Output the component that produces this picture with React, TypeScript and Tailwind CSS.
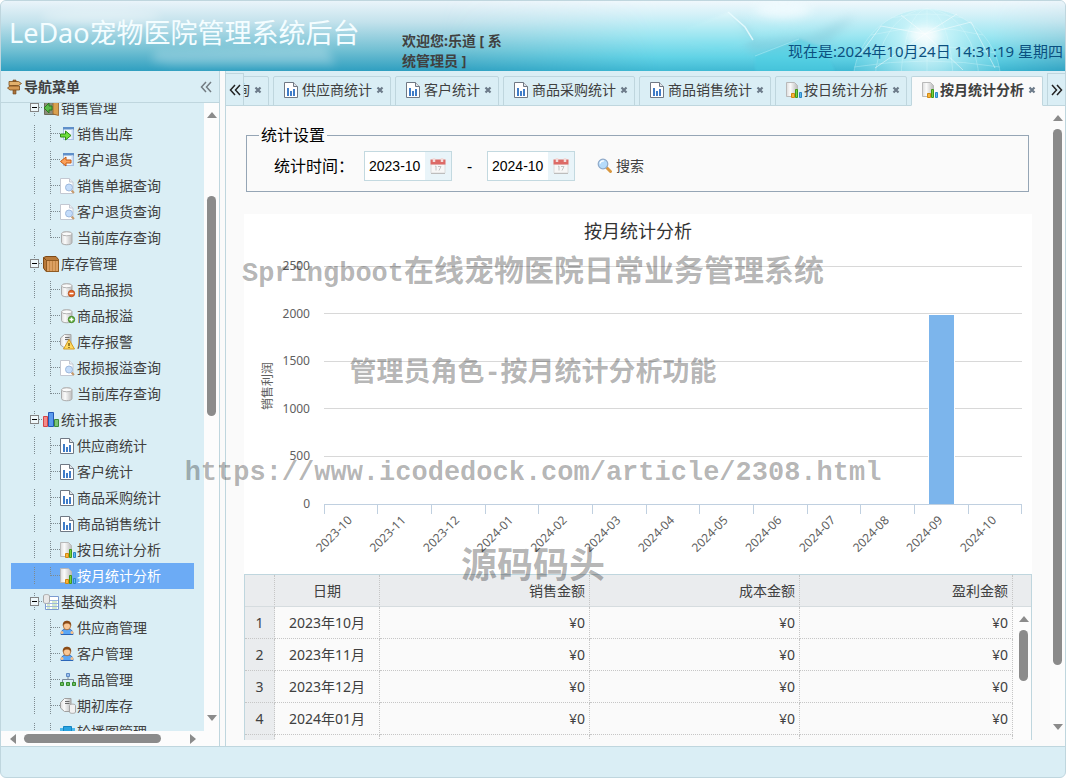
import type { ReactNode } from "react";

type IconName =
  | "signpost" | "door" | "appGo" | "appBack" | "pageSearch" | "db" | "box" | "dbMinus" | "dbPlus"
  | "serverWarn" | "bars" | "pageBars" | "docChart" | "dbTable" | "user" | "sitemap" | "serverDb"
  | "slides" | "calendar" | "magnifier";

const cylinder = (
  <>
    <path d="M1.500 4c0-3 10.500-3 10.500 0v8.500c0 3-10.500 3-10.500 0z" fill="url(#metal)" stroke="#aaa" />
    <ellipse cx="6.750" cy="3.800" rx="5.200" ry="2" fill="#fafafa" stroke="#b4b4b4" />
  </>
);

const windowFrame = (
  <>
    <rect x="3.500" y="1.500" width="10" height="12" fill="#f3f8fe" stroke="#a9c0e2" />
    <path d="M3 1h11v2.500H3z" fill="#5f8fc9" />
    <path d="M11.500 3.500H13V13h-1.500z" fill="#c9dcf3" />
  </>
);

const icons: Record<IconName, ReactNode> = {
  signpost: (
    <>
      <path d="M6 1h3v14H6z" fill="#a9713a" stroke="#6f4518" strokeWidth=".6" />
      <path d="M2 2.500h9.500l3 2-3 2H2z" fill="#e2b06c" stroke="#7b4c1b" strokeWidth=".8" />
      <path d="M12.500 7H3L.5 9 3 11h9.500z" fill="#d59a55" stroke="#7b4c1b" strokeWidth=".8" />
    </>
  ),
  door: (
    <>
      <path d="M1.500 1.500h13v13h-13z" fill="#8b8b7a" stroke="#6c6c5c" />
      <path d="M10 1l5.500-.5v15L10 14z" fill="#d9a04f" stroke="#94602a" strokeWidth=".8" />
      <path d="M9 6H6V3L1 8l5 5v-3h3z" fill="#58b947" stroke="#2b7a1f" />
    </>
  ),
  appGo: (
    <>
      {windowFrame}
      <path d="M.5 8h5V5l5.500 4.500L5.500 14v-3h-5z" fill="#6fe03c" stroke="#2f8a16" />
    </>
  ),
  appBack: (
    <>
      {windowFrame}
      <path d="M11 8H6V5L.5 9.500 6 14v-3h5z" fill="#fba15a" stroke="#c65a12" />
    </>
  ),
  pageSearch: (
    <>
      <path d="M.5 .5h9l3.500 3.500v11.500H.5z" fill="#fff" stroke="#c3c8d2" />
      <path d="M9.500 .5V4H13" fill="#e9edf3" stroke="#c3c8d2" />
      <path d="M11.500 12.500l2.500 2.500" stroke="#c59a6c" strokeWidth="2" />
      <circle cx="9" cy="9.500" r="3.500" fill="#c4dcfa" stroke="#9db8dc" />
    </>
  ),
  db: cylinder,
  dbMinus: (
    <>
      {cylinder}
      <circle cx="11.500" cy="11.500" r="3.200" fill="#e2672a" stroke="#b34510" strokeWidth=".8" />
      <path d="M9.500 11.500h4" stroke="#fff" strokeWidth="1.500" />
    </>
  ),
  dbPlus: (
    <>
      {cylinder}
      <circle cx="11.500" cy="11.500" r="3.200" fill="#5fae3c" stroke="#3a7d1d" strokeWidth=".8" />
      <path d="M9.500 11.500h4M11.500 9.500v4" stroke="#fff" strokeWidth="1.500" />
    </>
  ),
  serverWarn: (
    <>
      <path d="M.5 4l4-3.500H11v13H4L.5 11z" fill="url(#metal)" stroke="#a8a8a8" />
      <path d="M5 3.500h4.500M5 5.500h4.500" stroke="#6f6f6f" />
      <path d="M9 5.500l5.500 9.500H3.500z" fill="#ffd95e" stroke="#d29a22" />
      <path d="M9 9v3M9 13v1" stroke="#5b4300" strokeWidth="1.200" />
    </>
  ),
  box: (
    <>
      <path d="M.5 1.500L3 .5h10l2.500 3v12H3L.5 12z" fill="#b97a3a" stroke="#7d4a17" />
      <path d="M3.500 4.500h12v11h-12z" fill="#dca062" stroke="#8f5a22" />
      <path d="M6.500 5v10M9.500 5v10M12.500 5v10" stroke="#c48746" />
      <path d="M.5 1.500l3 3" stroke="#7d4a17" />
    </>
  ),
  bars: (
    <>
      <path d="M.5 4.500h4v10h-4z" fill="#f58a8a" stroke="#d44545" />
      <path d="M5.500 .5h5v14h-5z" fill="#5b9bef" stroke="#2458b5" />
      <path d="M11.500 7.500h4v7h-4z" fill="#7cc576" stroke="#3f8a3a" />
    </>
  ),
  pageBars: (
    <>
      <path d="M.5 .5h9l4 4v11H.5z" fill="#fff" stroke="#6f7884" />
      <path d="M3 6h2v8H3zM6 9h2v5H6zM9 7h2v7H9z" fill="#3f7cc7" />
      <path d="M9.500 .5v4h4" fill="#dfe3e8" stroke="#6f7884" />
    </>
  ),
  docChart: (
    <>
      <path d="M.5 .5h8l3 3v11H.5z" fill="url(#metal)" stroke="#b9b9b9" />
      <path d="M5.500 11.500h3v4h-3z" fill="#f7b43a" stroke="#d18812" />
      <path d="M9.500 7.500h2v8h-2z" fill="#7bcf3d" stroke="#3f971a" />
      <path d="M13.500 10.500h2v5h-2z" fill="#5cb7ef" stroke="#2b86c7" />
    </>
  ),
  dbTable: (
    <>
      <path d="M2.500 2.500h13v13h-13z" fill="#fff" stroke="#7b9bd0" />
      <path d="M3 6.500h12M3 9.500h12M3 12.500h12" stroke="#9db7e0" />
      <path d="M4 11h3M9 8h5M9 11h5M4 14h3M9 14h5" stroke="#a9d49b" />
      <path d="M.5 2c0-2 6-2 6 0v6c0 2-6 2-6 0z" fill="#e8e8e8" stroke="#a8a8a8" />
    </>
  ),
  user: (
    <>
      <path d="M1 14.500c0-4 2-5.500 6-5.500s6 1.500 6 5.500z" fill="#5ba7f5" stroke="#2b66b8" />
      <circle cx="2" cy="12.500" r="1.500" fill="#f7c08a" />
      <circle cx="12" cy="12.500" r="1.500" fill="#f7c08a" />
      <ellipse cx="7" cy="6" rx="3.600" ry="3.800" fill="#f9c795" stroke="#a4622a" strokeWidth=".8" />
      <path d="M2.800 6C2.300 2 5 .8 7 .8s4.700 1.200 4.200 5.200c-1-2-2.200-2.500-4.200-2.500S3.800 4 2.800 6z" fill="#8a4b16" />
    </>
  ),
  sitemap: (
    <>
      <path d="M8 5v3M2.500 10V7.500h11V10" fill="none" stroke="#7b8a99" />
      <path d="M6.500 1.500h3v3h-3z" fill="#9cc1ee" stroke="#5d8ac4" />
      <path d="M.5 10.500h3v3h-3zM6.500 10.500h3v3h-3zM12.500 10.500h3v3h-3z" fill="#6dbd62" stroke="#358a2c" />
    </>
  ),
  serverDb: (
    <>
      <path d="M.5 4.500l4-4H11v13H4.500L.5 10z" fill="url(#metal)" stroke="#a0a0a0" />
      <path d="M5 3.500h4.500M5 5.500h4.500" stroke="#6a6a6a" />
      <path d="M9.500 7.500c0-1.800 6-1.800 6 0V14c0 1.800-6 1.800-6 0z" fill="#f1f1f1" stroke="#a4a4a4" />
    </>
  ),
  slides: (
    <>
      <path d="M3.500 2.500h8v12h-8z" fill="#29a3e0" stroke="#1385c2" />
      <path d="M0 4h3v9H0zM12 4h3v9h-3z" fill="#4cb9ec" />
    </>
  ),
  calendar: (
    <>
      <path d="M1 6h14v9H1z" fill="#f7f7f7" stroke="#dcdcdc" />
      <path d="M.5 1.500h15V6.500H.5z" fill="#dd6a66" />
      <path d="M4 0v4M12 0v4" stroke="#f3dcdb" strokeWidth="2.500" />
      <path d="M5 8.500l1-.5v4.500M8 8.500h3l-2 4" fill="none" stroke="#c2c2c2" />
      <path d="M1 15.500h14" stroke="#bdbdbd" />
    </>
  ),
  magnifier: (
    <>
      <path d="M9.500 9.500l4 4" stroke="#d9973f" strokeWidth="3" strokeLinecap="round" />
      <circle cx="6" cy="6" r="4.800" fill="#b5dbfa" stroke="#8fa9c8" strokeWidth="1.200" />
      <path d="M3 5.500c.5-2 2-2.700 4-2.500" fill="none" stroke="#fff" strokeWidth="1.200" />
    </>
  ),
};

function Icon({ name }: { name: IconName }) {
  return (
    <svg viewBox="0 0 16 16" className="h-4 w-4 shrink-0" aria-hidden="true">
      {icons[name]}
    </svg>
  );
}

function Chevrons({ right }: { right?: boolean }) {
  return (
    <svg viewBox="0 0 12 12" className={right ? "h-3 w-3 rotate-180" : "h-3 w-3"} aria-hidden="true">
      <path d="M6 1L1.500 6 6 11M11 1L6.500 6l4.500 5" fill="none" stroke="currentColor" strokeWidth="1.500" />
    </svg>
  );
}

type NodeItem = { label: string; icon: IconName };
type Group = NodeItem & { children: NodeItem[] };

const menu: Group[] = [
  {
    label: "销售管理",
    icon: "door",
    children: [
      { label: "销售出库", icon: "appGo" },
      { label: "客户退货", icon: "appBack" },
      { label: "销售单据查询", icon: "pageSearch" },
      { label: "客户退货查询", icon: "pageSearch" },
      { label: "当前库存查询", icon: "db" },
    ],
  },
  {
    label: "库存管理",
    icon: "box",
    children: [
      { label: "商品报损", icon: "dbMinus" },
      { label: "商品报溢", icon: "dbPlus" },
      { label: "库存报警", icon: "serverWarn" },
      { label: "报损报溢查询", icon: "pageSearch" },
      { label: "当前库存查询", icon: "db" },
    ],
  },
  {
    label: "统计报表",
    icon: "bars",
    children: [
      { label: "供应商统计", icon: "pageBars" },
      { label: "客户统计", icon: "pageBars" },
      { label: "商品采购统计", icon: "pageBars" },
      { label: "商品销售统计", icon: "pageBars" },
      { label: "按日统计分析", icon: "docChart" },
      { label: "按月统计分析", icon: "docChart" },
    ],
  },
  {
    label: "基础资料",
    icon: "dbTable",
    children: [
      { label: "供应商管理", icon: "user" },
      { label: "客户管理", icon: "user" },
      { label: "商品管理", icon: "sitemap" },
      { label: "期初库存", icon: "serverDb" },
      { label: "轮播图管理", icon: "slides" },
    ],
  },
];

const tabs: NodeItem[] = [
  { label: "当前库存查询", icon: "db" },
  { label: "供应商统计", icon: "pageBars" },
  { label: "客户统计", icon: "pageBars" },
  { label: "商品采购统计", icon: "pageBars" },
  { label: "商品销售统计", icon: "pageBars" },
  { label: "按日统计分析", icon: "docChart" },
  { label: "按月统计分析", icon: "docChart" },
];

const activeLabel = "按月统计分析";

const stats = [
  { month: "2023-10", profit: 0 },
  { month: "2023-11", profit: 0 },
  { month: "2023-12", profit: 0 },
  { month: "2024-01", profit: 0 },
  { month: "2024-02", profit: 0 },
  { month: "2024-03", profit: 0 },
  { month: "2024-04", profit: 0 },
  { month: "2024-05", profit: 0 },
  { month: "2024-06", profit: 0 },
  { month: "2024-07", profit: 0 },
  { month: "2024-08", profit: 0 },
  { month: "2024-09", profit: 1990 },
  { month: "2024-10", profit: 0 },
];

const rows = ["2023年10月", "2023年11月", "2023年12月", "2024年01月", "2024年02月"];

function Arrow({ d }: { d: string }) {
  return (
    <svg viewBox="0 0 10 10" className="h-2.5 w-2.5 shrink-0" aria-hidden="true">
      <path d={d} fill="#8b8b8b" />
    </svg>
  );
}

function Scrollbar({ before, thumb, after }: { before: number; thumb: number; after: number }) {
  return (
    <div className="flex h-full w-[15px] shrink-0 flex-col items-center bg-[#fcfcfc] py-2">
      <Arrow d="M0 7l5-6 5 6z" />
      <div className="my-[5px] flex w-[9px] flex-1 flex-col">
        <div className="basis-0" style={{ flexGrow: before }} />
        <div className="basis-0 rounded-full bg-[#8b8b8b]" style={{ flexGrow: thumb }} />
        <div className="basis-0" style={{ flexGrow: after }} />
      </div>
      <Arrow d="M0 2l5 6 5-6z" />
    </div>
  );
}

function Banner() {
  return (
    <svg
      viewBox="0 0 1064 70"
      preserveAspectRatio="none"
      className="absolute inset-0 h-full w-full"
      aria-hidden="true"
    >
      <defs>
        <linearGradient id="sky" x1="0" y1="0" x2="0" y2="1">
          <stop offset="0" stopColor="#eaf4fa" />
          <stop offset=".3" stopColor="#c3e2ec" />
          <stop offset=".7" stopColor="#72c0d3" />
          <stop offset="1" stopColor="#2f9fc0" />
        </linearGradient>
        <linearGradient id="cyan" x1="0" y1="0" x2="0" y2="1">
          <stop offset="0" stopColor="#f0f8fc" />
          <stop offset=".2" stopColor="#d3f1f8" />
          <stop offset=".5" stopColor="#9ce6f1" />
          <stop offset=".8" stopColor="#62d3e6" />
          <stop offset="1" stopColor="#40b9d3" />
        </linearGradient>
        <linearGradient id="fadeX" x1="0" y1="0" x2="1" y2="0">
          <stop offset="0" stopColor="#fff" stopOpacity="0" />
          <stop offset=".35" stopColor="#fff" />
          <stop offset=".88" stopColor="#fff" />
          <stop offset="1" stopColor="#fff" stopOpacity=".2" />
        </linearGradient>
        <mask id="rightSide">
          <rect x="440" width="624" height="70" fill="url(#fadeX)" />
        </mask>
        <radialGradient id="globe" cx=".5" cy=".25" r=".6">
          <stop offset="0" stopColor="#fff" />
          <stop offset=".3" stopColor="#cdf5fa" stopOpacity=".9" />
          <stop offset="1" stopColor="#63cfe2" stopOpacity=".4" />
        </radialGradient>
        <linearGradient id="cube" x1="0" y1="0" x2="0" y2="1">
          <stop offset="0" stopColor="#e6f8fb" />
          <stop offset="1" stopColor="#6edbeb" />
        </linearGradient>
        <filter id="soft" x="-50%" y="-200%" width="200%" height="500%">
          <feGaussianBlur stdDeviation="5" />
        </filter>
        <filter id="edge" x="-20%" y="-20%" width="140%" height="140%">
          <feGaussianBlur stdDeviation="1" />
        </filter>
      </defs>
      <rect width="1064" height="70" fill="url(#sky)" />
      <rect x="440" width="624" height="70" fill="url(#cyan)" mask="url(#rightSide)" />
      <ellipse cx="100" cy="16" rx="60" ry="7" fill="#fff" opacity=".35" filter="url(#soft)" />
      <path d="M150 60l5-10 170-4 10 18H170z" fill="#fff" opacity=".25" filter="url(#soft)" />
      <path d="M735 14l20 26 55-6 45-20-30 30-75 8z" fill="#7fbccd" opacity=".35" filter="url(#soft)" />
      <path d="M686 27l41-16 25 29-36 10-30-8z" fill="url(#cube)" opacity=".6" filter="url(#edge)" />
      <path d="M727 11l17 15 8 13" fill="none" stroke="#ecfdff" strokeWidth="1.500" opacity=".8" />
      <path d="M754 55l44-17 24 8 12 24h-80z" fill="#4ccde2" opacity=".5" filter="url(#edge)" />
      <path d="M754 55l44-17" stroke="#c9f6fb" opacity=".4" />
      <ellipse cx="782" cy="8" rx="28" ry="9" fill="#f2fcff" opacity=".8" filter="url(#soft)" />
      <circle cx="926" cy="82" r="74" fill="url(#globe)" opacity=".75" />
      <g fill="none" stroke="#e9fdff" strokeWidth=".7" opacity=".4">
        <circle cx="926" cy="82" r="74" />
        <ellipse cx="926" cy="82" rx="52" ry="74" />
        <ellipse cx="926" cy="82" rx="26" ry="74" />
        <path d="M926 8v62M890 17q36-8 72 0M870 34q56-14 112 0M857 52q69-14 138 0M853 66q73-12 146 0" />
      </g>
      <g fill="none" stroke="#fff" strokeWidth=".8" opacity=".6">
        <path d="M880 25l44 8 46-12M924 33l38 36M924 33l-50 34M900 14l24 19 32-20M970 21l24 46M880 25l-22 30" />
      </g>
      <ellipse cx="923" cy="34" rx="16" ry="8" fill="#fff" opacity=".8" filter="url(#soft)" />
    </svg>
  );
}

function Header() {
  return (
    <header className="relative flex h-[70px] shrink-0 overflow-hidden">
      <Banner />
      <h1 className="relative w-[401px] shrink-0 pt-3 pl-2 text-[27px] leading-10 text-[#f4fdff]">
        LeDao宠物医院管理系统后台
      </h1>
      <p className="relative w-28 shrink-0 pt-[30px] text-sm font-bold text-[#404040]">
        欢迎您:乐道 [ 系统管理员 ]
      </p>
      <time className="relative ml-auto pt-[38px] pr-0.5 text-[15px] leading-6 whitespace-nowrap text-[#0b5080]">
        现在是:2024年10月24日 14:31:19 星期四
      </time>
    </header>
  );
}

function TreeRow({ item, lead }: { item: NodeItem; lead: "root" | "mid" | "last" }) {
  const selected = item.label === activeLabel;
  return (
    <a
      href="#"
      className={`flex h-[26px] items-center whitespace-nowrap text-sm ${
        selected ? "bg-[#6cabf5] text-white" : "text-[#404040]"
      }`}
    >
      {lead === "root" ? (
        <svg viewBox="0 0 32 18" className="h-[18px] w-8 shrink-0" aria-hidden="true">
          <path d="M23.500 0v18M28 8.500h4" stroke="#7d8a90" strokeDasharray="1 1" />
          <rect x="19.500" y="4.500" width="8" height="8" fill="#eef7fa" stroke="#848484" />
          <path d="M21 8.500h5" stroke="#000" />
        </svg>
      ) : (
        <svg viewBox="0 0 49 18" className="h-[18px] w-[49px] shrink-0" aria-hidden="true">
          <path
            d={lead === "last" ? "M23.500 0v18M39.500 0v9M40 8.500h9" : "M23.500 0v18M39.500 0v18M40 8.500h9"}
            stroke="#7d8a90"
            strokeDasharray="1 1"
          />
        </svg>
      )}
      <Icon name={item.icon} />
      <span className={lead === "root" ? "ml-0.5" : "ml-px"}>{item.label}</span>
    </a>
  );
}

function Sidebar() {
  return (
    <aside className="flex w-[219px] shrink-0 flex-col border-r border-[#bfd6de] bg-[#daeef5]">
      <div className="flex h-8 shrink-0 items-center border-b border-[#bfd6de] pr-[7px] pl-1.5">
        <Icon name="signpost" />
        <h2 className="ml-px text-sm font-bold text-[#404040]">导航菜单</h2>
        <button type="button" aria-label="收起" className="ml-auto text-[#737c82]">
          <Chevrons />
        </button>
      </div>
      <div className="flex min-h-0 flex-1">
        <nav className="min-w-0 flex-1 overflow-hidden">
          <ul className="-mt-2 px-2.5">
            {menu.map((group) => (
              <li key={group.label}>
                <TreeRow item={group} lead="root" />
                <ul>
                  {group.children.map((child, i) => (
                    <li key={child.label}>
                      <TreeRow
                        item={child}
                        lead={i === group.children.length - 1 && group.label !== "基础资料" ? "last" : "mid"}
                      />
                    </li>
                  ))}
                </ul>
              </li>
            ))}
          </ul>
        </nav>
        <Scrollbar before={70} thumb={220} after={292} />
      </div>
      <div className="flex h-[15px] shrink-0 items-center bg-[#fcfcfc] pr-[21px] pl-2">
        <Arrow d="M7 0L1 5l6 5z" />
        <div className="mx-[5px] flex h-[9px] flex-1">
          <div className="basis-0 rounded-full bg-[#8b8b8b]" style={{ flexGrow: 137 }} />
          <div className="basis-0" style={{ flexGrow: 22 }} />
        </div>
        <Arrow d="M2 0l6 5-6 5z" />
      </div>
    </aside>
  );
}

function TabStrip() {
  return (
    <div className="flex h-[35px] shrink-0 items-end bg-[#daeef5] shadow-[inset_0_-1px_0_#bfd6de]">
      <button
        type="button"
        aria-label="向左滚动"
        className="flex h-[33px] w-[18px] shrink-0 items-center justify-center border-t border-r border-b border-[#bfd6de] text-[#222]"
      >
        <Chevrons />
      </button>
      <div className="flex min-w-0 flex-1 justify-end gap-1 overflow-hidden pr-1">
        {tabs.map((tab) => {
          const active = tab.label === activeLabel;
          return (
            <div
              key={tab.label}
              className={`flex h-[30px] shrink-0 items-center rounded-t-xs border pr-1.5 pb-0.5 pl-2.5 text-sm text-[#404040] ${
                active ? "border-[#bfd6de] border-b-[#fafafa] bg-[#fafafa] font-bold" : "border-[#bfd6de]"
              }`}
            >
              <Icon name={tab.icon} />
              <a href="#" className="mr-1 ml-0.5 whitespace-nowrap">
                {tab.label}
              </a>
              <button type="button" aria-label="关闭" className="text-[#6c7a89]">
                <svg viewBox="0 0 8 8" className="h-2 w-2" aria-hidden="true">
                  <path d="M1.500 1.500l5 5M6.500 1.500l-5 5" stroke="currentColor" strokeWidth="2.200" />
                </svg>
              </button>
            </div>
          );
        })}
      </div>
      <button
        type="button"
        aria-label="向右滚动"
        className="flex h-[33px] w-[18px] shrink-0 items-center justify-center border-t border-b border-l border-[#bfd6de] text-[#222]"
      >
        <Chevrons right />
      </button>
    </div>
  );
}

function MonthBox({ id, value, label }: { id: string; value: string; label?: string }) {
  return (
    <div className="flex h-[30px] w-[88px] border border-[#c3d9e0] bg-white">
      <input
        id={id}
        aria-label={label}
        defaultValue={value}
        className="w-[60px] min-w-0 pl-1 font-['Liberation_Sans',sans-serif] text-sm text-black outline-none"
      />
      <button
        type="button"
        aria-label="选择月份"
        className="flex flex-1 items-center justify-center bg-[#e9f4f9]"
      >
        <Icon name="calendar" />
      </button>
    </div>
  );
}

function Filters() {
  return (
    <fieldset className="mr-[3px] ml-0.5 border border-[#95a5b5] pt-1 pb-2.5">
      <legend className="ml-3 px-0.5 text-base text-black">统计设置</legend>
      <div className="flex items-center pl-[27px]">
        <label htmlFor="from" className="mr-2.5 text-base text-black">
          统计时间：
        </label>
        <MonthBox id="from" value="2023-10" />
        <span className="w-[35px] text-center text-base">-</span>
        <MonthBox id="to" value="2024-10" label="结束月份" />
        <button type="button" className="ml-[22px] flex items-center gap-[3px] text-sm text-[#404040]">
          <Icon name="magnifier" />
          搜索
        </button>
      </div>
    </fieldset>
  );
}

function Chart() {
  const left = 80;
  const width = 698;
  const bottom = 290;
  const height = 238;
  const step = width / stats.length;
  const snap = (n: number) => Math.floor(n) + 0.5;

  return (
    <svg viewBox="0 0 788 360" className="mt-[22px] block w-full bg-white" role="img" aria-label="按月统计分析">
      <text x="394" y="24" textAnchor="middle" className="fill-[#333] text-[18px]">
        按月统计分析
      </text>
      {[0, 500, 1000, 1500, 2000, 2500].map((v) => {
        const y = bottom - (v / 2500) * height;
        return (
          <g key={v}>
            <path d={`M${left} ${snap(y)}h${width}`} stroke={v ? "#d8d8d8" : "#c0d0e0"} />
            <text x="66" y={y + 4} textAnchor="end" className="fill-[#606060] text-[12px]">
              {v}
            </text>
          </g>
        );
      })}
      <text
        transform="translate(28 172) rotate(-90)"
        textAnchor="middle"
        className="fill-[#606060] text-[12px]"
      >
        销售利润
      </text>
      {stats.map((s, i) => {
        const x = left + step * i;
        const cx = x + step / 2;
        const h = Math.round((s.profit / 2500) * height);
        const barX = Math.round(cx - 12.5);
        return (
          <g key={s.month}>
            <path d={`M${snap(x)} ${bottom}v10`} stroke="#c0d0e0" />
            {h > 0 && (
              <>
                <rect x={barX - 1} y={bottom - h - 1} width="27" height={h + 1} fill="#fff" />
                <rect x={barX} y={bottom - h} width="25" height={h} fill="#7cb5ec" />
              </>
            )}
            <text
              transform={`translate(${cx + 2} 307) rotate(-45)`}
              textAnchor="end"
              className="fill-[#606060] text-[12px]"
            >
              {s.month}
            </text>
          </g>
        );
      })}
      <path d={`M${left + width - 0.5} ${bottom}v10`} stroke="#c0d0e0" />
    </svg>
  );
}

function StatTable() {
  const th = "h-8 border-r border-b border-r-[#c6c6c6] border-b-[#d6dcdf] [border-right-style:dotted] font-normal";
  const td = "h-8 border-r border-b border-dotted border-[#c6c6c6]";
  return (
    <div className="border-t border-r border-l border-[#bfd6de]">
      <table className="w-full table-fixed border-separate border-spacing-0 text-sm text-[#404040]">
        <colgroup>
          <col className="w-[30px]" />
          <col className="w-[105px]" />
          <col className="w-[210px]" />
          <col className="w-[210px]" />
          <col />
          <col className="w-[18px]" />
        </colgroup>
        <thead className="bg-[#eaecee]">
          <tr>
            <th className={th} aria-label="序号" />
            <th className={th}>日期</th>
            <th className={`${th} pr-1 text-right`}>销售金额</th>
            <th className={`${th} pr-1 text-right`}>成本金额</th>
            <th className={`${th} pr-1 text-right`}>盈利金额</th>
            <th className="border-b border-[#d6dcdf]" />
          </tr>
        </thead>
        <tbody>
          {rows.map((month, i) => (
            <tr key={month}>
              <td className={`${td} bg-[#eaecee] text-center`}>{i + 1}</td>
              <td className={`${td} text-center`}>{month}</td>
              <td className={`${td} pr-1 text-right`}>¥0</td>
              <td className={`${td} pr-1 text-right`}>¥0</td>
              <td className={`${td} pr-1 text-right`}>¥0</td>
              {i === 0 && (
                <td rowSpan={rows.length} className="h-40 bg-[#fcfcfc] pl-[3px]">
                  <div className="flex h-40">
                    <Scrollbar before={0} thumb={51} after={63} />
                  </div>
                </td>
              )}
            </tr>
          ))}
        </tbody>
      </table>
    </div>
  );
}

function Watermark() {
  return (
    <div className="pointer-events-none absolute inset-0 flex flex-col items-center overflow-hidden pt-[250px] font-['Liberation_Mono','Noto_Sans_CJK_SC',monospace] font-bold whitespace-nowrap text-black/30">
      <p className="h-[101px] text-[30px] leading-11">
        <span className="text-[27px]">Springboot</span>在线宠物医院日常业务管理系统
      </p>
      <p className="h-[99px] text-[27px] leading-11">管理员角色-按月统计分析功能</p>
      <p className="h-24 text-[27px] leading-11">https://www.icodedock.com/article/2308.html</p>
      <p className="text-[36px] leading-11">源码码头</p>
    </div>
  );
}

export default function App() {
  return (
    <div
      lang="zh-CN"
      className="relative flex h-screen flex-col overflow-hidden rounded-md border border-[#bfd6de] bg-[#daeef5] font-['Noto_Sans','Noto_Sans_CJK_SC',sans-serif]"
    >
      <svg className="absolute h-0 w-0" aria-hidden="true">
        <linearGradient id="metal" x1="0" y1="0" x2="1" y2="0">
          <stop offset="0" stopColor="#dcdcdc" />
          <stop offset=".35" stopColor="#fbfbfb" />
          <stop offset="1" stopColor="#bcbcbc" />
        </linearGradient>
      </svg>
      <Header />
      <div className="flex min-h-0 flex-1 bg-[#fafafa]">
        <Sidebar />
        <main className="ml-[5px] flex min-w-0 flex-1 flex-col border-l border-[#bfd6de]">
          <TabStrip />
          <div className="mb-1.5 flex min-h-0 flex-1">
            <div className="min-w-0 flex-1 overflow-hidden px-[18px] pt-[17px]">
              <Filters />
              <Chart />
              <StatTable />
            </div>
            <Scrollbar before={0} thumb={536} after={52} />
          </div>
        </main>
      </div>
      <footer className="h-[31px] shrink-0 border-t border-[#bfd6de]" />
      <Watermark />
    </div>
  );
}
